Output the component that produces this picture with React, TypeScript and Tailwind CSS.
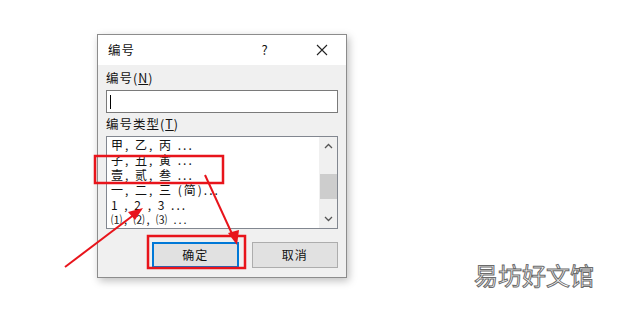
import React from "react";

const font = { fontFamily: '"Noto Sans CJK SC", "Noto Sans", sans-serif' };

export default function App() {
  const items = [
    "甲, 乙, 丙 ...",
    "子, 丑, 寅 ...",
    "壹, 贰, 叁 ...",
    "一, 二, 三 (简)...",
    "1 , 2 , 3  ...",
    "⑴, ⑵, ⑶ ...",
  ];
  return (
    <div className="relative w-[620px] h-[309px] bg-white overflow-hidden" style={font}>
      <div className="pl-[97px] pt-[34px]">
        <div className="w-[250px] h-[244px] border border-[#8c8c8c] bg-[#f0f0f0] shadow-[2px_3px_8px_rgba(0,0,0,0.25)] flex flex-col">
          <div className="h-[30px] bg-white flex items-center pl-[10px] text-[12.5px] tracking-[1px] text-[#111]">
            <span className="flex-1">编号</span>
            <span className="w-[30px] mr-[18px] text-center text-[13px]">?</span>
            <span className="w-[48px] flex justify-center">
              <svg width="12" height="12" viewBox="0 0 12 12">
                <path d="M1 1 L11 11 M11 1 L1 11" stroke="#222" strokeWidth="1.1" />
              </svg>
            </span>
          </div>
          <div className="flex flex-col px-[8px] text-[12.5px] tracking-[1px] text-[#111]">
            <div className="h-[25px] pt-[5px] leading-[16px]">
              编号(<span className="underline">N</span>)
            </div>
            <div className="h-[23px] bg-white border border-[#7a7a7a] flex items-center pl-[3px]">
              <div className="w-[1px] h-[14px] bg-black" />
            </div>
            <div className="h-[23px] pt-[3px] leading-[16px]">
              编号类型(<span className="underline">T</span>)
            </div>
            <div className="h-[93px] bg-white border border-[#828790] flex tracking-normal">
              <div className="flex-1 pl-[4px] text-[12px] leading-[15px] tracking-[2px]">
                {items.map((t, i) => (
                  <div key={i} className={i === 5 ? "h-[15px] text-[11px]" : "h-[15px]"}>{t}</div>
                ))}
              </div>
              <div className="w-[18px] bg-[#f0f0f0] flex flex-col items-center">
                <div className="h-[18px] flex items-center justify-center">
                  <svg width="9" height="6" viewBox="0 0 9 6"><path d="M1 5 L4.5 1.5 L8 5" stroke="#555" strokeWidth="1.3" fill="none" /></svg>
                </div>
                <div className="h-[19px]" />
                <div className="w-[17px] h-[25px] bg-[#cdcdcd]" />
                <div className="flex-1" />
                <div className="h-[18px] flex items-center justify-center">
                  <svg width="9" height="6" viewBox="0 0 9 6"><path d="M1 1 L4.5 4.5 L8 1" stroke="#555" strokeWidth="1.3" fill="none" /></svg>
                </div>
              </div>
            </div>
            <div className="flex gap-[13px] pt-[13px] pl-[46px] tracking-[1px]">
              <div className="w-[87px] h-[26px] bg-[#e1e1e1] border-2 border-[#0078d7] flex items-center justify-center text-[12px]">确定</div>
              <div className="w-[87px] h-[26px] bg-[#e1e1e1] border border-[#adadad] flex items-center justify-center text-[12px]">取消</div>
            </div>
          </div>
        </div>
      </div>
      <div
        className="absolute left-[474px] top-[260px] text-[24px] leading-[30px] text-white"
        style={{ ...font, WebkitTextStroke: "1px #6b6b6b" }}
      >
        易坊好文馆
      </div>
      <svg className="absolute left-0 top-0" width="620" height="309" viewBox="0 0 620 309">
        <rect x="95" y="156" width="128" height="27" fill="none" stroke="#e8141b" strokeWidth="2.5" />
        <rect x="148" y="236" width="97" height="32" fill="none" stroke="#e8141b" strokeWidth="2.5" />
        <line x1="65" y1="267" x2="135" y2="214" stroke="#e8141b" strokeWidth="2" />
        <polygon points="143,208 128,212 135,220" fill="#e8141b" />
        <line x1="205" y1="175" x2="233" y2="236" stroke="#e8141b" strokeWidth="2" />
        <polygon points="237,245 228,233 239,230" fill="#e8141b" />
      </svg>
    </div>
  );
}
